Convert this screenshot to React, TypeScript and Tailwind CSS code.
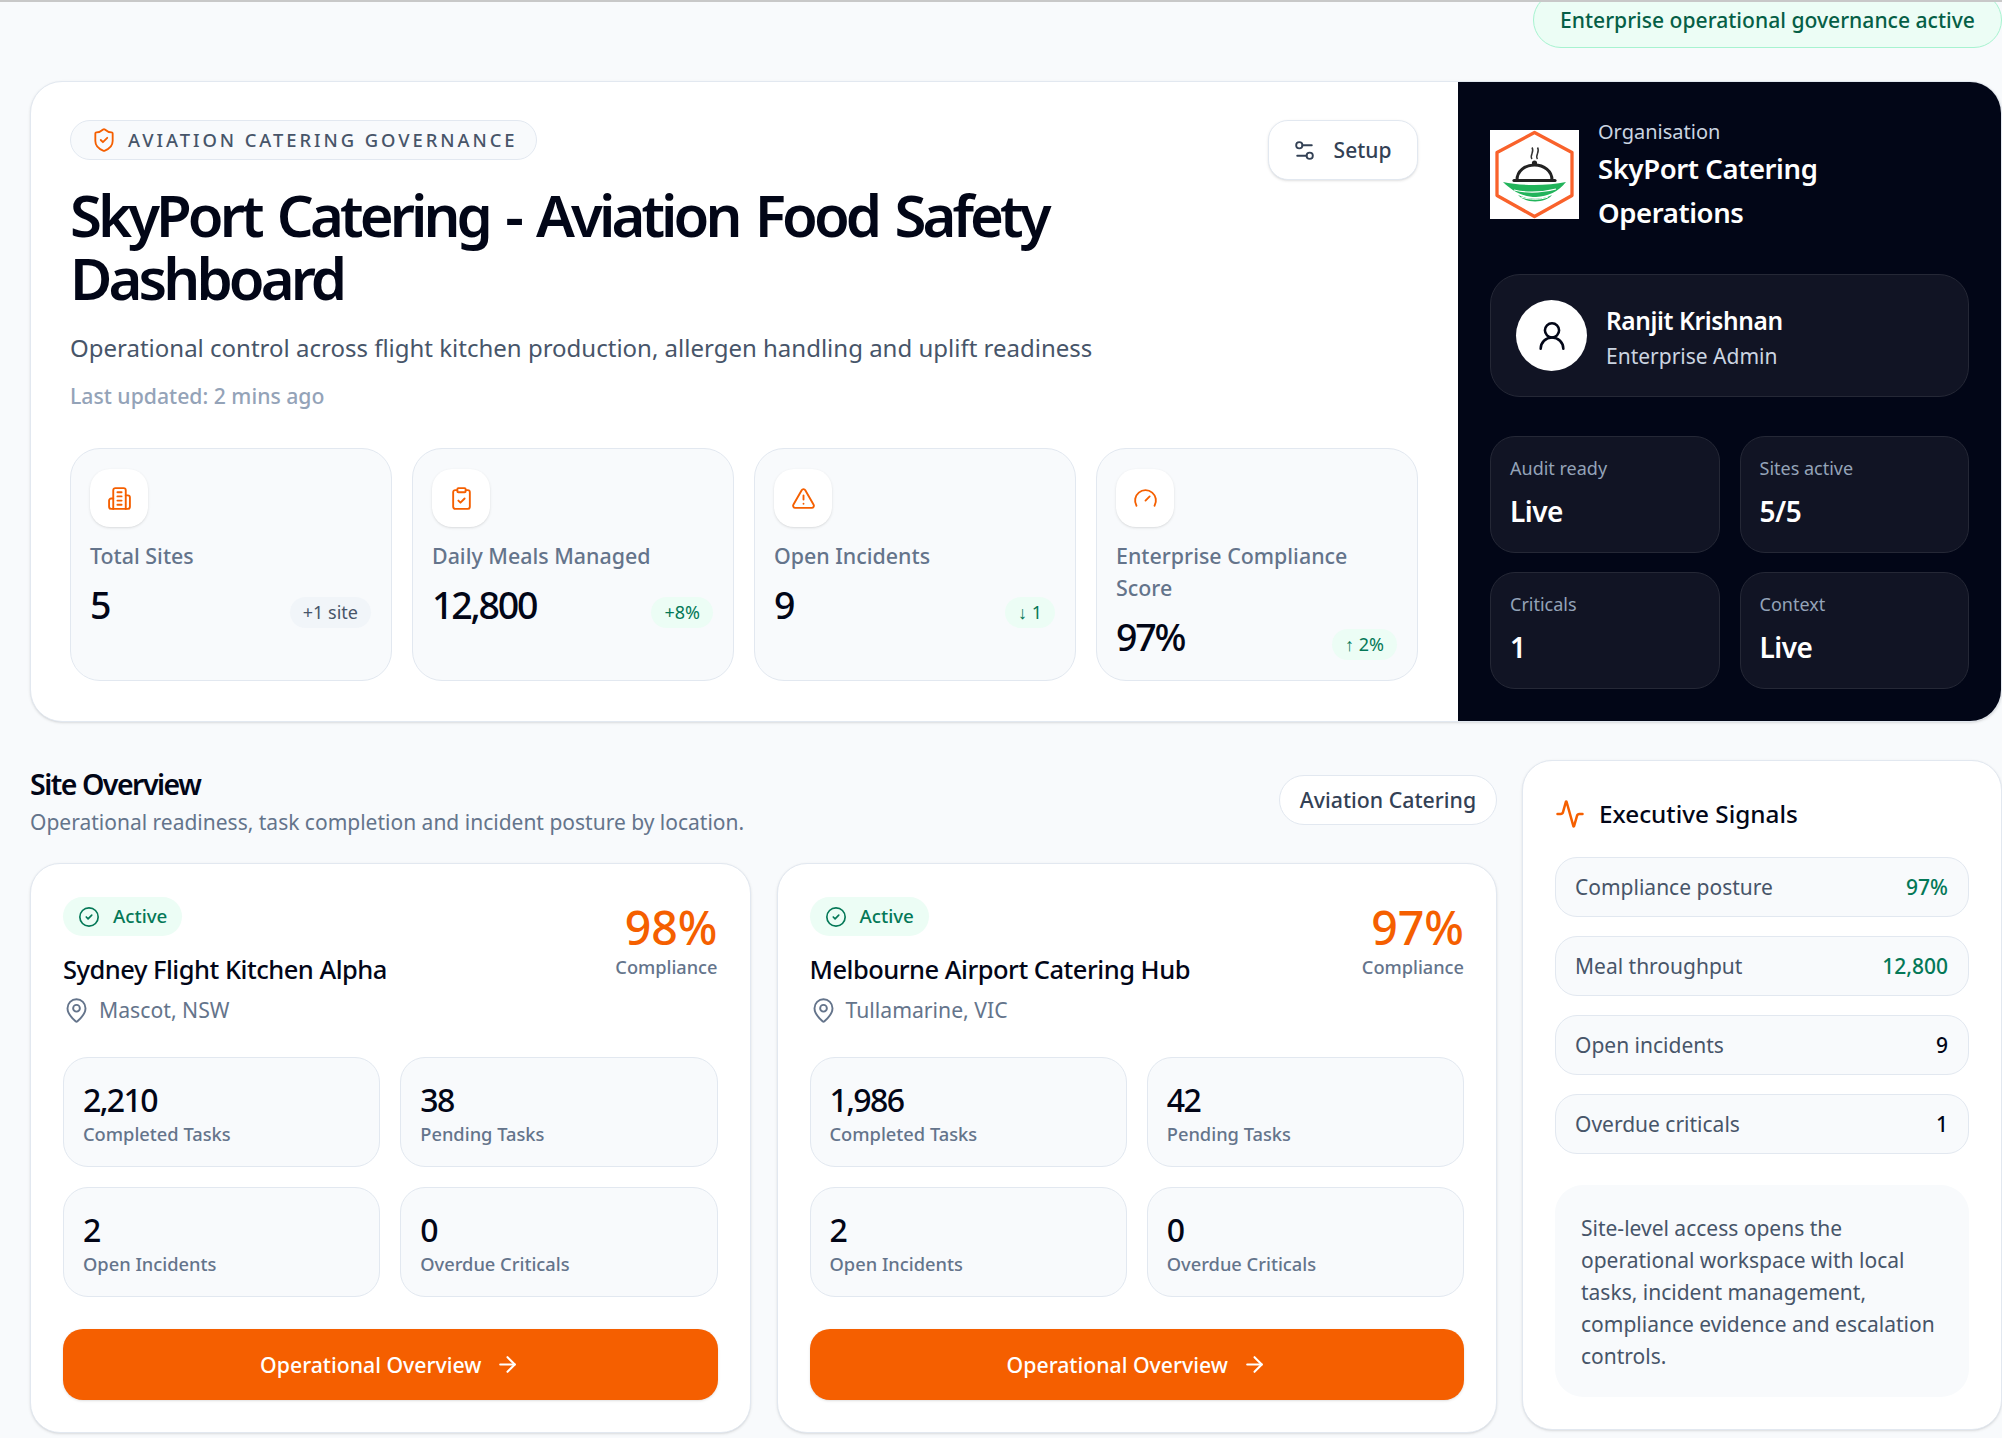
import React from "react";
import { ShieldCheck, Settings2, ClipboardCheck, TriangleAlert, Gauge, Activity, MapPin, CircleCheck, ArrowRight, UserRound } from "lucide-react";

const font = { fontFamily: '"Noto Sans", "Open Sans", sans-serif' };

function Tower() {
  return (
    <svg width="25" height="25" viewBox="0 0 24 24" fill="none" stroke="#f55f00" strokeWidth="1.8" strokeLinecap="round" strokeLinejoin="round">
      <path d="M6 22V4a2 2 0 0 1 2-2h8a2 2 0 0 1 2 2v18Z" />
      <path d="M6 12H4a2 2 0 0 0-2 2v6a2 2 0 0 0 2 2h2" />
      <path d="M18 9h2a2 2 0 0 1 2 2v9a2 2 0 0 1-2 2h-2" />
      <path d="M10 6h4M10 10h4M10 14h4M10 18h4" />
    </svg>
  );
}

function Logo() {
  return (
    <div className="w-[89px] h-[89px] bg-white shrink-0">
      <svg viewBox="0 0 89 89" className="w-full h-full">
        <path d="M44.5 2.5 L82 22.5 V65.5 L44.5 86.5 L7 65.5 V22.5 Z" fill="none" stroke="#f9622b" strokeWidth="3.3" strokeLinejoin="round" />
        <path d="M42 29c-3-3.5 3-7 0-11.500M47.500 29c-3-3.500 3-7 0-11.500" fill="none" stroke="#333" strokeWidth="1.5" />
        <circle cx="44.500" cy="33" r="2.600" fill="#222" />
        <path d="M27 50c0-9 8-15 17.500-15S62 41 62 50" fill="none" stroke="#222" strokeWidth="3" />
        <path d="M24 50.500H65" stroke="#222" strokeWidth="3.200" strokeLinecap="round" />
        <path d="M13 52C30 56 58 56 76 52C68 62 58 66 46 67C32 67 21 60 13 52Z" fill="#22b45b" />
        <path d="M28 65C38 70 52 70 62 65C56 73 36 74 28 65Z" fill="#22b45b" />
        <path d="M24 60C36 63 50 63 66 59" stroke="#fff" strokeWidth="1.100" fill="none" />
        <path d="M31 67C40 70 50 70 58 67" stroke="#fff" strokeWidth="1" fill="none" />
      </svg>
    </div>
  );
}

function Stat({ icon, label, value, badge, green }: { icon: React.ReactNode; label: string; value: string; badge: string; green?: boolean }) {
  return (
    <div className="rounded-[30px] border border-[#e2e8f0] bg-[#f8fafc] pl-[19px] pr-5 pt-5 h-[233px]">
      <div className="w-[58px] h-[58px] rounded-[20px] bg-white flex items-center justify-center shadow-sm">{icon}</div>
      <div className="mt-[13px] text-[21.400px] leading-[32px] text-[#64748b] font-medium">{label}</div>
      <div className="mt-[10px] flex items-end justify-between">
        <div className="text-[37.500px] leading-[45px] font-medium text-[#020617] tracking-[-2.200px]">{value}</div>
        <div className={`h-[31px] px-[13px] -mb-[1px] rounded-full text-[18px] leading-[31px] ${green ? "bg-[#ecfdf5] text-[#047857]" : "bg-[#f1f5f9] text-[#475569]"}`}>{badge}</div>
      </div>
    </div>
  );
}

function Tile({ value, label }: { value: string; label: string }) {
  return (
    <div className="h-[110px] rounded-[25px] border border-[#e2e8f0] bg-[#f8fafc] pl-[19px] pr-5 pt-[22px]">
      <div className="text-[32px] leading-[40px] font-medium text-[#020617] tracking-[-1.600px]">{value}</div>
      <div className="mt-[2px] text-[18.300px] leading-[24px] font-medium text-[#64748b]">{label}</div>
    </div>
  );
}

function SiteCard({ name, loc, pct, a, b }: { name: string; loc: string; pct: string; a: string; b: string }) {
  return (
    <div className="rounded-[30px] border border-[#e2e8f0] bg-white px-8 pt-[33px] h-[570px] shadow-sm">
      <div className="flex justify-between">
        <div>
          <div className="inline-flex items-center gap-[13px] h-[39px] rounded-full bg-[#ecfdf5] px-[15px] text-[18.750px] font-medium text-[#047857]">
            <CircleCheck size={22} strokeWidth={1.8} />
            Active
          </div>
          <div className="mt-[15px] text-[25.500px] leading-[36px] font-medium tracking-[-0.500px] text-[#020617]">{name}</div>
          <div className="mt-[5px] flex items-center gap-[9px] text-[21.200px] leading-[36px] text-[#64748b]">
            <MapPin size={27} strokeWidth={1.7} />
            {loc}
          </div>
        </div>
        <div className="text-right pt-[4px]">
          <div className="text-[46.500px] leading-[52px] font-medium text-[#f55f00]">{pct}</div>
          <div className="mt-[1px] text-[18.200px] leading-[26px] font-medium text-[#64748b]">Compliance</div>
        </div>
      </div>
      <div className="mt-[29px] grid grid-cols-2 gap-x-[20px] gap-y-[20px]">
        <Tile value={a} label="Completed Tasks" />
        <Tile value={b} label="Pending Tasks" />
        <Tile value="2" label="Open Incidents" />
        <Tile value="0" label="Overdue Criticals" />
      </div>
      <div className="mt-[32px] h-[71px] rounded-[20px] bg-[#f55f00] text-white flex items-center justify-center gap-[14px] text-[21.250px] font-medium shadow-sm">
        Operational Overview
        <ArrowRight size={25} strokeWidth={2} />
      </div>
    </div>
  );
}

function Row({ label, value, green }: { label: string; value: string; green?: boolean }) {
  return (
    <div className="h-[60px] rounded-[22px] border border-[#e2e8f0] bg-[#f8fafc] pl-[19px] pr-5 pt-[2px] flex items-center justify-between">
      <span className="text-[21px] text-[#475569]">{label}</span>
      <span className={`text-[21px] font-medium ${green ? "text-[#047857]" : "text-[#020617]"}`}>{value}</span>
    </div>
  );
}

function DarkTile({ label, value }: { label: string; value: string }) {
  return (
    <div className="h-[117px] rounded-[25px] border border-[#252836] bg-[#111424] pl-[19px] pr-5 pt-[18px]">
      <div className="text-[18px] leading-[26px] text-[#94a3b8]">{label}</div>
      <div className="mt-[11px] text-[28px] leading-[38px] font-semibold tracking-[-0.500px] text-white">{value}</div>
    </div>
  );
}

export default function App() {
  return (
    <div style={font} className="min-h-[1438px] bg-[#f8fafc] overflow-hidden">
      <div className="h-[2px] bg-[#c8c8c8] relative z-10" />
      <div className="flex justify-end h-[79px]">
        <div className="h-[56px] -mt-[10px] w-[469px] rounded-[28px] border border-[#a7f3d0] bg-[#ecfdf5] text-[#065f46] text-[21.100px] font-medium pl-[26px] flex items-center whitespace-nowrap">
          Enterprise operational governance active
        </div>
      </div>
      <div className="pl-[30px]">
        <div className="flex h-[641px] rounded-[32px] border border-[#e2e8f0] bg-white shadow-sm overflow-hidden">
          <div className="w-[1427px] shrink-0 pl-[39px] pr-10 pt-[38px]">
            <div className="flex justify-between items-start">
              <div className="w-[1100px]">
                <div className="inline-flex items-center gap-[11px] h-[40px] rounded-full border border-[#e2e8f0] bg-[#f8fafc] pl-[20px] pr-[18px] text-[18.400px] font-medium tracking-[0.16em] text-[#475569]">
                  <ShieldCheck size={26} strokeWidth={1.7} className="text-[#f55f00]" />
                  AVIATION CATERING GOVERNANCE
                </div>
                <h1 className="mt-[23px] text-[58px] leading-[63px] font-semibold tracking-[-3.900px] [word-spacing:5px] text-[#020617]">SkyPort Catering - Aviation Food Safety Dashboard</h1>
                <div className="mt-[21px] text-[24px] leading-[36px] text-[#475569]">Operational control across flight kitchen production, allergen handling and uplift readiness</div>
                <div className="mt-[15px] text-[21.200px] leading-[30px] font-medium text-[#94a3b8]">Last updated: 2 mins ago</div>
              </div>
              <div className="h-[60px] w-[150px] rounded-[20px] border border-[#e2e8f0] bg-white flex items-center justify-center gap-[17px] pr-[3px] pt-[1px] text-[21px] font-medium text-[#334155] shadow-sm">
                <Settings2 size={25} strokeWidth={1.8} />
                Setup
              </div>
            </div>
            <div className="mt-[37px] grid grid-cols-4 gap-[20px]">
              <Stat icon={<Tower />} label="Total Sites" value="5" badge="+1 site" />
              <Stat icon={<ClipboardCheck size={25} className="text-[#f55f00]" strokeWidth={1.8} />} label="Daily Meals Managed" value="12,800" badge="+8%" green />
              <Stat icon={<TriangleAlert size={25} className="text-[#f55f00]" strokeWidth={1.8} />} label="Open Incidents" value="9" badge="↓ 1" green />
              <Stat icon={<Gauge size={25} className="text-[#f55f00]" strokeWidth={1.8} />} label="Enterprise Compliance Score" value="97%" badge="↑ 2%" green />
            </div>
          </div>
          <div className="flex-1 bg-[#020617] pl-8 pr-8 pt-[48px]">
            <div className="flex gap-[19px]">
              <Logo />
              <div className="-mt-[16px]">
                <div className="text-[20px] leading-[36px] text-[#cbd5e1]">Organisation</div>
                <div className="-mt-[3px] w-[260px] text-[27.500px] leading-[44px] font-semibold tracking-[-0.400px] text-white">SkyPort Catering Operations</div>
              </div>
            </div>
            <div className="mt-[39px] h-[123px] rounded-[30px] border border-[#252836] bg-[#111424] px-[25px] flex items-center gap-[19px]">
              <div className="w-[71px] h-[71px] rounded-full bg-white flex items-center justify-center text-[#020617]">
                <UserRound size={34} strokeWidth={1.8} />
              </div>
              <div className="pt-[4px]">
                <div className="text-[24.500px] leading-[36px] font-semibold tracking-[-0.400px] text-white">Ranjit Krishnan</div>
                <div className="text-[21px] leading-[34px] text-[#cbd5e1]">Enterprise Admin</div>
              </div>
            </div>
            <div className="mt-[39px] grid grid-cols-2 gap-x-[20px] gap-y-[19px]">
              <DarkTile label="Audit ready" value="Live" />
              <DarkTile label="Sites active" value="5/5" />
              <DarkTile label="Criticals" value="1" />
              <DarkTile label="Context" value="Live" />
            </div>
          </div>
        </div>
        <div className="mt-[38px] flex gap-[25px]">
          <div className="w-[1467px] shrink-0">
            <div className="flex justify-between items-start pt-[4px]">
              <div>
                <div className="text-[28.500px] leading-[40px] font-semibold tracking-[-1.500px] text-[#020617]">Site Overview</div>
                <div className="text-[21px] leading-[37px] text-[#64748b]">Operational readiness, task completion and incident posture by location.</div>
              </div>
              <div className="h-[50px] w-[218px] mt-[11px] rounded-full border border-[#e2e8f0] bg-white flex items-center justify-center text-[21.300px] font-medium text-[#334155]">Aviation Catering</div>
            </div>
            <div className="mt-[22px] grid grid-cols-2 gap-[26px]">
              <SiteCard name="Sydney Flight Kitchen Alpha" loc="Mascot, NSW" pct="98%" a="2,210" b="38" />
              <SiteCard name="Melbourne Airport Catering Hub" loc="Tullamarine, VIC" pct="97%" a="1,986" b="42" />
            </div>
          </div>
          <div className="flex-1 h-[670px] rounded-[30px] border border-[#e2e8f0] bg-white shadow-sm px-8 pt-[31px]">
            <div className="flex items-center gap-[14px] h-[44px]">
              <Activity size={30} strokeWidth={2} className="text-[#f55f00]" />
              <span className="text-[24.300px] font-medium text-[#020617]">Executive Signals</span>
            </div>
            <div className="mt-[21px] flex flex-col gap-[19px]">
              <Row label="Compliance posture" value="97%" green />
              <Row label="Meal throughput" value="12,800" green />
              <Row label="Open incidents" value="9" />
              <Row label="Overdue criticals" value="1" />
            </div>
            <div className="mt-[31px] rounded-[28px] bg-[#f8fafc] pl-[26px] pr-[26px] pt-[27px] pb-[25px] text-[21px] leading-[32px] text-[#475569]">
              Site-level access opens the operational workspace with local tasks, incident management, compliance evidence and escalation controls.
            </div>
          </div>
        </div>
      </div>
    </div>
  );
}
